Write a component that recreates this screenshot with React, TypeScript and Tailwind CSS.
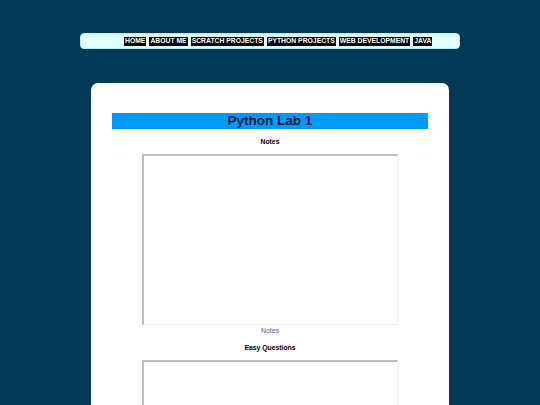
import React from "react";

const navItems = ["HOME", "ABOUT ME", "SCRATCH PROJECTS", "PYTHON PROJECTS", "WEB DEVELOPMENT", "JAVA"];

export default function App() {
  return (
    <div
      className="min-h-[405px] w-full overflow-hidden bg-[#023a56] pt-[33px]"
      style={{ fontFamily: '"Liberation Sans", Arial, sans-serif' }}
    >
      <nav className="mx-auto flex h-[16px] w-[380px] items-center rounded-[4px] border border-[#bfe9ee] bg-[#e0ffff] pl-[43px]">
        <div className="flex gap-[3px]">
          {navItems.map((t) => (
            <span
              key={t}
              className="flex h-[9px] items-center bg-black px-[1px] text-[6.8px] font-bold leading-none text-white"
            >
              {t}
            </span>
          ))}
        </div>
      </nav>

      <main className="mx-auto mt-[34px] w-[358px] rounded-t-[7px] bg-white px-[21px] pt-[30px] pb-[20px]">
        <h1 className="flex h-[16px] items-center justify-center bg-[#0099ff] text-[13.5px] font-bold leading-none text-[#0b1a2c]">
          Python Lab 1
        </h1>
        <div className="mt-[9px] text-center text-[6.8px] font-bold leading-[8px] text-black">Notes</div>
        <div className="mx-auto mt-[8px] h-[171px] w-[256px] border-t-2 border-l-2 border-r border-b border-t-[#bdbdbd] border-l-[#bdbdbd] border-r-[#efefef] border-b-[#efefef] bg-white" />
        <div className="mt-[2px] text-center text-[6.8px] leading-[8px] text-[#4e5c9c]">Notes</div>
        <div className="mt-[9px] text-center text-[6.8px] font-bold leading-[8px] text-black">Easy Questions</div>
        <div className="mx-auto mt-[8px] h-[171px] w-[256px] border-t-2 border-l-2 border-r border-b border-t-[#bdbdbd] border-l-[#bdbdbd] border-r-[#efefef] border-b-[#efefef] bg-white" />
      </main>
    </div>
  );
}
